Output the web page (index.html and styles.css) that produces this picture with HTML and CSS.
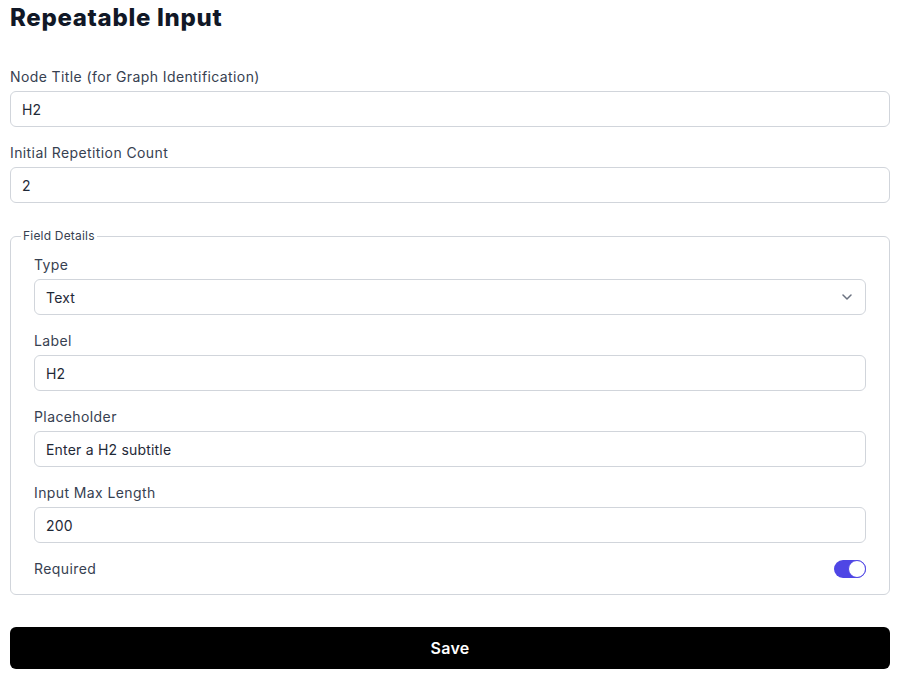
FILE: index.html
```html
<!DOCTYPE html>
<html lang="en">
<head>
    <meta charset="UTF-8">
    <meta name="viewport" content="width=device-width, initial-scale=1.0">
    <title>Repeatable Input</title>
    <link rel="stylesheet" href="styles.css">
</head>
<body>
    <div class="panel">
        <h1>Repeatable Input</h1>

        <div class="field">
            <label for="nodeTitle">Node Title (for Graph Identification)</label>
            <input type="text" id="nodeTitle" value="H2">
        </div>

        <div class="field">
            <label for="repeatCount">Initial Repetition Count</label>
            <input type="text" id="repeatCount" value="2">
        </div>

        <fieldset class="details">
            <legend>Field Details</legend>

            <div class="field">
                <label for="fieldType">Type</label>
                <div class="select-wrap">
                    <select id="fieldType">
                        <option>Text</option>
                        <option>Number</option>
                        <option>Textarea</option>
                    </select>
                    <svg class="chevron" width="10" height="6" viewBox="0 0 10 6" fill="none">
                        <path d="M1 1l4 4 4-4" stroke="#6b7280" stroke-width="1.5" stroke-linecap="round" stroke-linejoin="round"/>
                    </svg>
                </div>
            </div>

            <div class="field">
                <label for="fieldLabel">Label</label>
                <input type="text" id="fieldLabel" value="H2">
            </div>

            <div class="field">
                <label for="fieldPlaceholder">Placeholder</label>
                <input type="text" id="fieldPlaceholder" value="Enter a H2 subtitle">
            </div>

            <div class="field">
                <label for="maxLength">Input Max Length</label>
                <input type="text" id="maxLength" value="200">
            </div>

            <div class="toggle-row">
                <span>Required</span>
                <label class="switch">
                    <input type="checkbox" checked>
                    <span class="slider"></span>
                </label>
            </div>
        </fieldset>

        <button class="save-btn">Save</button>
    </div>
</body>
</html>
```

FILE: styles.css
```css
body {
    margin: 0;
    font-family: "Inter", "Noto Sans", sans-serif;
    color: #374151;
    background: #fff;
}
.panel {
    padding: 2px 10px 10px 10px;
}
h1 {
    margin: 0 0 33px 0;
    font-size: 24px;
    line-height: 32px;
    font-weight: 800;
    letter-spacing: 0.7px;
    color: #111827;
}
.field {
    margin-bottom: 16px;
}
.field label {
    display: block;
    font-size: 14px;
    line-height: 20px;
    letter-spacing: 0.4px;
    margin-bottom: 4px;
    color: #374151;
}
.field input,
.field select {
    display: block;
    box-sizing: border-box;
    width: 100%;
    height: 36px;
    padding: 0 11px;
    border: 1px solid #d1d5db;
    border-radius: 6px;
    font-family: inherit;
    font-size: 14px;
    letter-spacing: 0.2px;
    color: #1f2937;
    background: #fff;
    outline: none;
}
.select-wrap {
    position: relative;
}
.field select {
    appearance: none;
    -webkit-appearance: none;
}
.chevron {
    position: absolute;
    right: 14px;
    top: 15px;
    pointer-events: none;
}
.details {
    margin: 25px 0 32px 0;
    padding: 11px 23px 15px 23px;
    border: 1px solid #d1d5db;
    border-radius: 6px;
}
.details legend {
    font-size: 12px;
    line-height: 16px;
    letter-spacing: 0.2px;
    padding: 0 2px;
    margin-left: -13px;
    color: #374151;
}
.toggle-row {
    display: flex;
    justify-content: space-between;
    align-items: center;
    font-size: 14px;
    line-height: 20px;
    letter-spacing: 0.4px;
}
.switch {
    position: relative;
    width: 32px;
    height: 18px;
    display: inline-block;
}
.switch input {
    display: none;
}
.slider {
    position: absolute;
    inset: 0;
    background: #4f46e5;
    border-radius: 9px;
}
.slider::after {
    content: "";
    position: absolute;
    right: 0;
    top: 0;
    width: 16px;
    height: 16px;
    background: #fff;
    border: 1px solid #4f46e5;
    border-radius: 50%;
}
.save-btn {
    display: block;
    width: 100%;
    height: 42px;
    border: none;
    border-radius: 6px;
    background: #000;
    color: #fff;
    font-family: inherit;
    font-size: 16px;
    font-weight: 600;
    letter-spacing: 0.3px;
    cursor: pointer;
}
```
